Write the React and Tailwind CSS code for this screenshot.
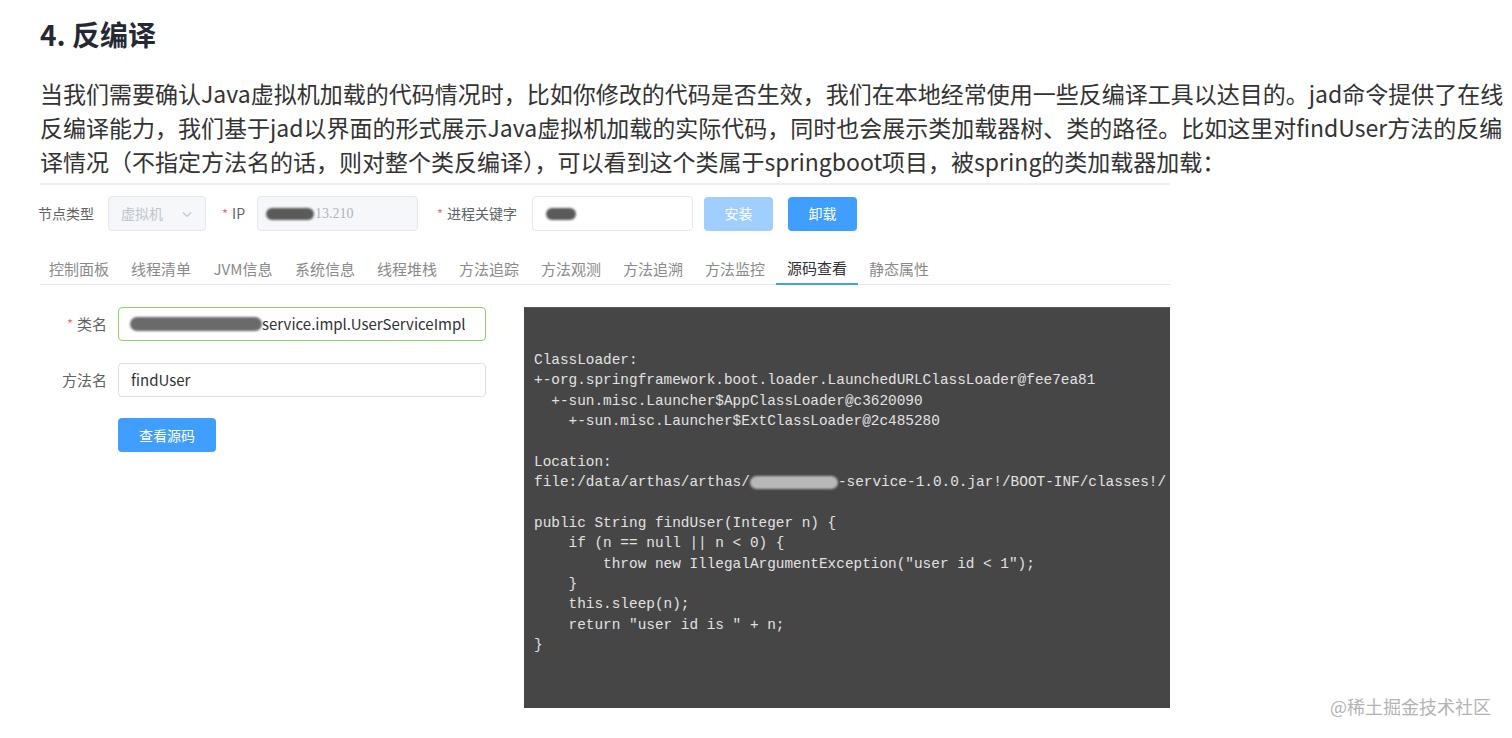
import React from "react";

const tabs = [
  "控制面板",
  "线程清单",
  "JVM信息",
  "系统信息",
  "线程堆栈",
  "方法追踪",
  "方法观测",
  "方法追溯",
  "方法监控",
  "源码查看",
  "静态属性",
];

const sans = "font-['Noto_Sans_CJK_SC','Noto_Sans',sans-serif]";

function Req() {
  return <span className="text-[#f56c6c] mr-[4px] text-[13px]">*</span>;
}

function TopBar() {
  return (
    <div className="flex items-center h-[35px] mt-[11px] text-[14px] text-[#606266]">
      <span className="ml-[-2px] w-[70px]">节点类型</span>
      <div className="w-[98px] h-[35px] border border-[#e4e7ed] bg-[#f5f7fa] rounded-[4px] flex items-center justify-between px-[12px] text-[#c0c4cc]">
        <span>虚拟机</span>
        <svg width="12" height="12" viewBox="0 0 12 12" fill="none" stroke="#c0c4cc" strokeWidth="1.2">
          <path d="M2 4.5l4 4 4-4" />
        </svg>
      </div>
      <span className="ml-[16px] w-[35px] flex items-center">
        <Req />IP
      </span>
      <div className="w-[161px] h-[35px] border border-[#e4e7ed] bg-[#f5f7fa] rounded-[4px] flex items-center pl-[8px] text-[#b0b3b8] font-['Liberation_Serif',serif] text-[14px]">
        <span className="w-[48px] h-[12px] rounded-full bg-[#5a5a5a] blur-[1px] mr-[1px]" />
        13.210
      </div>
      <span className="ml-[19px] w-[95px] flex items-center">
        <Req />进程关键字
      </span>
      <div className="w-[161px] h-[35px] border border-[#e4e7ed] bg-white rounded-[4px] flex items-center pl-[13px]">
        <span className="w-[30px] h-[12px] rounded-full bg-[#5a5a5a] blur-[1px]" />
      </div>
      <button className="ml-[11px] w-[69px] h-[34px] rounded-[4px] bg-[#a0cfff] text-white text-[14px]">
        安装
      </button>
      <button className="ml-[15px] w-[69px] h-[34px] rounded-[4px] bg-[#409eff] text-white text-[14px]">
        卸载
      </button>
    </div>
  );
}

function Tabs() {
  return (
    <div className="mt-[22px] flex border-b border-[#e4e7ed] h-[32px]">
      <div className="flex ml-[-2px]">
        {tabs.map((t, i) => (
          <div
            key={t}
            className={
              i === 9
                ? "w-[82px] h-[32px] flex items-center justify-center text-[15px] text-[#303133] border-b-2 border-[#409eff] -mb-px"
                : "w-[82px] h-[32px] flex items-center justify-center text-[15px] text-[#8a8a8a]"
            }
          >
            {t}
          </div>
        ))}
      </div>
    </div>
  );
}

function Form() {
  return (
    <div className="w-[484px] flex flex-col text-[15px] text-[#606266]">
      <div className="flex items-center h-[34px]">
        <div className="w-[78px] pr-[11px] flex justify-end items-center">
          <Req />类名
        </div>
        <div className="w-[368px] h-[34px] border border-[#8fd16b] rounded-[4px] flex items-center pl-[11px] text-[#303133]">
          <span className="w-[132px] h-[14px] rounded-full bg-[#6a6a6a] blur-[1px]" />
          <span>service.impl.UserServiceImpl</span>
        </div>
      </div>
      <div className="flex items-center h-[34px] mt-[22px]">
        <div className="w-[78px] pr-[11px] text-right">方法名</div>
        <div className="w-[368px] h-[34px] border border-[#dcdfe6] rounded-[4px] flex items-center pl-[12px] text-[#303133]">
          findUser
        </div>
      </div>
      <div className="flex mt-[21px]">
        <div className="w-[78px]" />
        <button className="w-[98px] h-[34px] rounded-[4px] bg-[#409eff] text-white text-[14px]">
          查看源码
        </button>
      </div>
    </div>
  );
}

function CodeBlock() {
  return (
    <div className="w-[646px] h-[401px] bg-[#464646] border-t border-[#5a5a5a] pt-[42px] pl-[10px] overflow-hidden">
      <pre className="font-['Liberation_Mono',monospace] text-[14.4px] leading-[20.36px] text-[#e2e2e2] whitespace-pre">
        {"ClassLoader:\n"}
        {"+-org.springframework.boot.loader.LaunchedURLClassLoader@fee7ea81\n"}
        {"  +-sun.misc.Launcher$AppClassLoader@c3620090\n"}
        {"    +-sun.misc.Launcher$ExtClassLoader@2c485280\n"}
        {"\n"}
        {"Location:\n"}
        {"file:/data/arthas/arthas/"}
        <span className="inline-block align-middle w-[88px] h-[13px] rounded-full bg-[#b8b8b8] blur-[1px]" />
        {"-service-1.0.0.jar!/BOOT-INF/classes!/\n"}
        {"\n"}
        {"public String findUser(Integer n) {\n"}
        {"    if (n == null || n < 0) {\n"}
        {'        throw new IllegalArgumentException("user id < 1");\n'}
        {"    }\n"}
        {"    this.sleep(n);\n"}
        {'    return "user id is " + n;\n'}
        {"}"}
      </pre>
    </div>
  );
}

export default function App() {
  return (
    <div className={`relative w-[1512px] h-[738px] bg-white overflow-hidden ${sans}`}>
      <div className="pl-[40px] pt-[14px]">
        <h2 className="text-[28px] leading-[40px] font-bold text-[#252933]">4. 反编译</h2>
        <p className="mt-[22px] text-[23px] leading-[34px] text-[#333333] w-[1470px]">
          当我们需要确认Java虚拟机加载的代码情况时，比如你修改的代码是否生效，我们在本地经常使用一些反编译工具以达目的。jad命令提供了在线反编译能力，我们基于jad以界面的形式展示Java虚拟机加载的实际代码，同时也会展示类加载器树、类的路径。比如这里对findUser方法的反编译情况（不指定方法名的话，则对整个类反编译），可以看到这个类属于springboot项目，被spring的类加载器加载：
        </p>
        <div className="mt-[5px] w-[1130px] h-[525px] border-t-2 border-[#efefef]">
          <TopBar />
          <Tabs />
          <div className="flex mt-[22px]">
            <Form />
            <CodeBlock />
          </div>
        </div>
      </div>
      <div className="absolute left-[1330px] top-[694px] text-[18px] leading-[24px] text-[#b3b3b3]">
        @稀土掘金技术社区
      </div>
    </div>
  );
}
